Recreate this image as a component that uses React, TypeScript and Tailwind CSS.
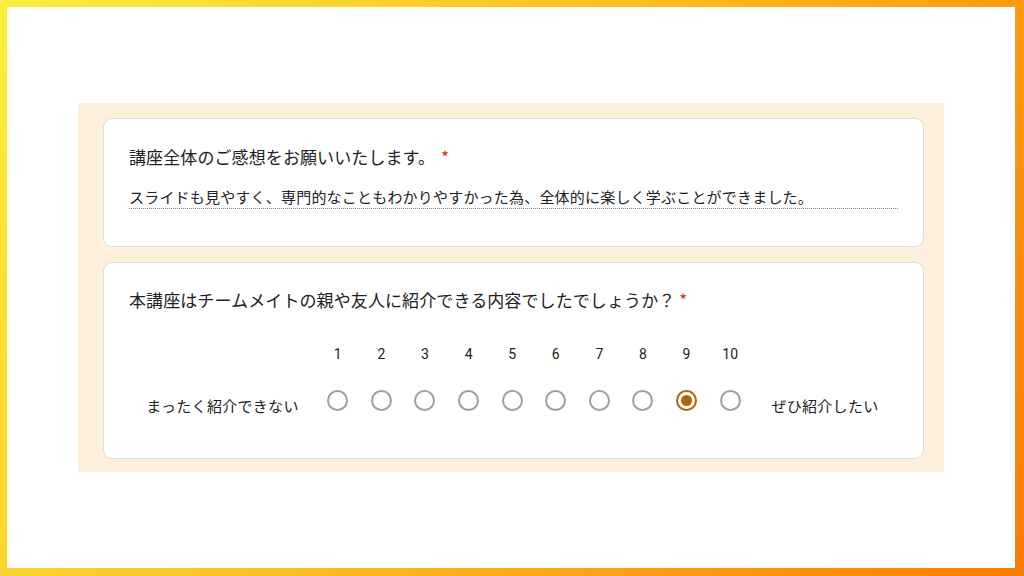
import React from "react";

const font = { fontFamily: '"Noto Sans CJK JP", "Noto Sans", Roboto, sans-serif' };

function Radio({ checked }: { checked?: boolean }) {
  return checked ? (
    <div className="w-[21px] h-[21px] rounded-full border-[2px] border-[#b0650c] flex items-center justify-center">
      <div className="w-[11px] h-[11px] rounded-full bg-[#b0650c]" />
    </div>
  ) : (
    <div className="w-[21px] h-[21px] rounded-full border-[2px] border-[#9aa0a6]" />
  );
}

export default function App() {
  const nums = [1, 2, 3, 4, 5, 6, 7, 8, 9, 10];
  return (
    <div
      className="w-[1024px] h-[576px] pt-[7px] pl-[7px] pr-[9px] pb-[8px] bg-[linear-gradient(120deg,#f9ef3c_0%,#fcbf24_45%,#ff7c00_100%)]"
      style={font}
    >
      <div className="w-full h-full bg-white pl-[71px] pt-[96px]">
        <div className="w-[866px] h-[369px] bg-[#feefdc] pl-[25px] pr-[20px] pt-[15px] flex flex-col gap-[15px]">
          <div className="h-[129px] bg-white rounded-[9px] border border-[#dadce0] px-[25px] pt-[26px]">
            <div className="text-[17px] leading-6 text-[#202124] tracking-[0.1px]">
              講座全体のご感想をお願いいたします。
              <span className="text-[#d93025] ml-[6px]">*</span>
            </div>
            <div className="mt-[18px] text-[15px] leading-5 text-[#202124] tracking-[0.2px] border-b border-dotted border-[#8a8a8a] pb-[1px]">
              スライドも見やすく、専門的なこともわかりやすかった為、全体的に楽しく学ぶことができました。
            </div>
          </div>
          <div className="h-[197px] bg-white rounded-[9px] border border-[#dadce0] px-[25px] pt-[25px]">
            <div className="text-[17px] leading-6 text-[#202124] tracking-[0.1px]">
              本講座はチームメイトの親や友人に紹介できる内容でしたでしょうか？
              <span className="text-[#d93025] ml-[4px]">*</span>
            </div>
            <div className="flex mt-[32px]">
              <div className="w-[187px]" />
              {nums.map((n) => (
                <div
                  key={n}
                  className="w-[43.6px] text-center text-[14px] leading-5 text-[#202124]"
                  style={{ fontFamily: 'Roboto, "Noto Sans", sans-serif' }}
                >
                  {n}
                </div>
              ))}
            </div>
            <div className="flex items-center h-[48px] mt-[12px]">
              <div className="w-[187px] text-center text-[15px] tracking-[0.3px] text-[#202124] pt-[12px]">
                まったく紹介できない
              </div>
              {nums.map((n) => (
                <div key={n} className="w-[43.6px] flex justify-center">
                  <Radio checked={n === 9} />
                </div>
              ))}
              <div className="flex-1 text-center text-[15px] tracking-[0.3px] text-[#202124] pt-[12px]">
                ぜひ紹介したい
              </div>
            </div>
          </div>
        </div>
      </div>
    </div>
  );
}
